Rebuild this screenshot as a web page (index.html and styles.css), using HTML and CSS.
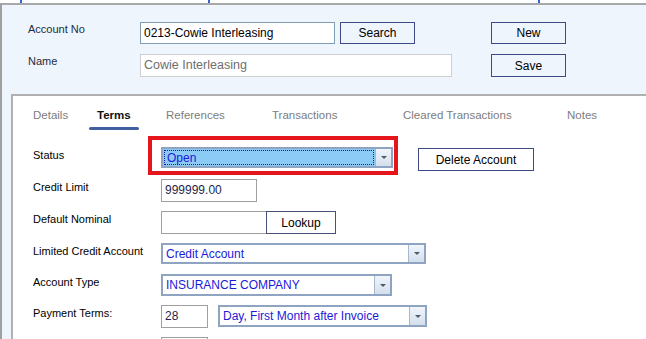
FILE: index.html
```html
<!DOCTYPE html>
<html lang="en">
<head>
  <meta charset="UTF-8" />
  <meta name="viewport" content="width=device-width, initial-scale=1.0"/>
  <title>Account - Terms</title>
  <link rel="stylesheet" href="styles.css">
</head>
<body>

  <!-- strip of the menu above (scrolled off, only the link tails show) -->
  <div class="topbar">
    <span class="top-mark top-mark-a"></span>
    <span class="top-mark top-mark-b"></span>
    <span class="top-mark top-mark-c"></span>
  </div>

  <div class="window">
    <!-- account header -->
    <div class="header">
      <div class="hrow">
        <span class="hlabel">Account No</span>
        <div class="textbox account-no">0213-Cowie Interleasing</div>
        <button class="btn btn-search">Search</button>
        <button class="btn btn-new">New</button>
      </div>
      <div class="hrow hrow-name">
        <span class="hlabel">Name</span>
        <div class="textbox name-box">Cowie Interleasing</div>
        <button class="btn btn-save">Save</button>
      </div>
    </div>

    <!-- tabbed area -->
    <div class="body-area">
      <div class="tabpanel">
        <div class="tabs">
          <span class="tab">Details</span>
          <span class="tab active">Terms</span>
          <span class="tab">References</span>
          <span class="tab">Transactions</span>
          <span class="tab">Cleared Transactions</span>
          <span class="tab">Notes</span>
        </div>

        <div class="form">
          <div class="row row-tall">
            <span class="label">Status</span>
            <div class="highlight-wrap">
              <div class="combo combo-status">
                <div class="combo-text"><span class="focus">Open</span></div>
                <div class="combo-btn"><i class="arrow"></i></div>
              </div>
              <div class="highlight"></div>
            </div>
            <button class="btn btn-delete">Delete Account</button>
          </div>

          <div class="row row-tall">
            <span class="label">Credit Limit</span>
            <div class="field credit-limit">999999.00</div>
          </div>

          <div class="row row-tall">
            <span class="label">Default Nominal</span>
            <div class="field nominal"></div>
            <button class="btn btn-lookup">Lookup</button>
          </div>

          <div class="row">
            <span class="label">Limited Credit Account</span>
            <div class="combo combo-limited">
              <div class="combo-text">Credit Account</div>
              <div class="combo-btn"><i class="arrow"></i></div>
            </div>
          </div>

          <div class="row">
            <span class="label">Account Type</span>
            <div class="combo combo-type">
              <div class="combo-text">INSURANCE COMPANY</div>
              <div class="combo-btn"><i class="arrow"></i></div>
            </div>
          </div>

          <div class="row row-tall">
            <span class="label">Payment Terms:</span>
            <div class="field days">28</div>
            <div class="combo combo-terms">
              <div class="combo-text">Day, First Month after Invoice</div>
              <div class="combo-btn"><i class="arrow"></i></div>
            </div>
          </div>

          <div class="row row-tall">
            <span class="label label-last">Auto Stop (days)</span>
            <div class="field days"></div>
          </div>
        </div>
      </div>
    </div>
  </div>

</body>
</html>
```

FILE: styles.css
```css
/* page basics */
html, body {
  margin: 0;
  padding: 0;
  background: #fff;
  font-family: 'Liberation Sans', Arial, sans-serif;
  font-size: 11px;
  color: #000;
  overflow: hidden;
}

/* menu strip that is cut off at the top */
.topbar {
  height: 3px;
  display: flex;
}

.top-mark {
  width: 2px;
  height: 3px;
  background: #3a5fd0;
}

.top-mark-a { margin-left: 20px; }
.top-mark-b { margin-left: 186px; }
.top-mark-c { margin-left: 328px; }

/* outer window frame */
.window {
  border-top: 2px solid #a9a9a9;
  border-left: 2px solid #a0a0a0;
  background: #eef5fd;
  height: 400px;
}

/* header block */
.header {
  padding: 17px 0 17px 26px;
}

.hrow {
  display: flex;
  align-items: center;
  height: 22px;
}

.hrow-name {
  margin-top: 10px;
  height: 23px;
}

.hlabel {
  width: 112px;
  color: #1d2b42;
  font-size: 11px;
  align-self: flex-start;
  padding-top: 1px;
}

.textbox {
  box-sizing: border-box;
  height: 100%;
  background: #fff;
  padding: 2px 3px;
  font-size: 12px;
  line-height: 16px;
  white-space: nowrap;
}

.account-no {
  width: 195px;
  border: 1px solid #7f9db9;
  color: #000;
}

.name-box {
  width: 312px;
  border: 1px solid #cfcfcf;
  color: #6e6e6e;
  font-size: 12.5px;
}

/* buttons */
.btn {
  box-sizing: border-box;
  height: 22px;
  width: 75px;
  border: 1px solid #3e4a86;
  background: #eef5fd;
  font-family: 'Liberation Sans', Arial, sans-serif;
  font-size: 12px;
  color: #000;
  padding: 0;
  cursor: pointer;
}

.btn-search { margin-left: 5px; }
.btn-new { margin-left: 76px; }
.btn-save { margin-left: 39px; height: 23px; }

/* tabbed panel */
.body-area {
  padding-left: 9px;
}

.tabpanel {
  background: #fff;
  border-top: 2px solid #b0b0b0;
  border-left: 2px solid #b0b0b0;
  height: 300px;
}

.tabs {
  display: grid;
  grid-template-columns: 64px 69px 106px 131px 164px auto;
  height: 36px;
  padding-left: 20px;
}

.tab {
  position: relative;
  padding-top: 12px;
  font-size: 11.5px;
  line-height: 14px;
  color: #7d7d7d;
  white-space: nowrap;
}

.tab.active {
  font-weight: bold;
  color: #111;
}

/* underline below the active tab */
.tab.active::after {
  content: "";
  position: absolute;
  left: -8px;
  width: 50px;
  bottom: 2px;
  height: 3px;
  border-radius: 2px;
  background: #3f5f9e;
}

/* form rows */
.form {
  padding: 15px 0 0 20px;
  display: flex;
  flex-direction: column;
  gap: 9px;
}

.row {
  display: flex;
  align-items: flex-start;
  height: 22px;
}

.row-tall {
  height: 23px;
}

.label {
  width: 128px;
  padding-top: 1px;
  font-size: 11px;
  line-height: 14px;
  white-space: nowrap;
}

.label-last {
  padding-top: 0;
}

.field {
  box-sizing: border-box;
  height: 23px;
  border: 1px solid #a0a0a0;
  background: #fff;
  padding: 2px 3px;
  font-size: 12px;
  line-height: 16px;
  color: #1f1f4a;
}

.credit-limit { width: 96px; }
.nominal { width: 106px; }
.days { width: 47px; }

.btn-lookup {
  width: 70px;
  height: 23px;
  margin-left: -1px;
  background: #fff;
  border-color: #4a4f78;
}

.btn-delete {
  width: 116px;
  height: 23px;
  margin: 1px 0 0 25px;
  background: #fff;
  border-color: #3e4a86;
}

/* combo boxes */
.combo {
  box-sizing: border-box;
  display: flex;
  height: 22px;
  border: 2px solid #8fa4c0;
  background: #fff;
}

.combo-text {
  flex: 1;
  padding: 0 3px;
  font-size: 12px;
  line-height: 18px;
  color: #1a1ad8;
  white-space: nowrap;
  overflow: hidden;
}

.combo-btn {
  width: 15px;
  border-left: 1px solid #a7b7cc;
  background: linear-gradient(#f1f5fb, #d4dfed);
  display: flex;
  align-items: center;
  justify-content: center;
}

.arrow {
  width: 0;
  height: 0;
  border-left: 3px solid transparent;
  border-right: 3px solid transparent;
  border-top: 3px solid #4c5a6e;
}

.combo-status { width: 232px; height: 21px; }
.combo-limited { width: 265px; height: 21px; }
.combo-type { width: 231px; }
.combo-terms { width: 209px; margin-left: 10px; }

.combo-status .combo-text {
  background: #8dcbf7;
  padding: 1px;
}

.focus {
  display: block;
  height: 100%;
  box-sizing: border-box;
  border: 1px dotted #1414b4;
  padding-left: 2px;
  line-height: 15px;
}

/* red annotation box around the status combo */
.highlight-wrap {
  position: relative;
}

.highlight {
  position: absolute;
  left: -13px;
  top: -11px;
  width: 250px;
  height: 39px;
  box-sizing: border-box;
  border: 4px solid #e4161c;
}
```
